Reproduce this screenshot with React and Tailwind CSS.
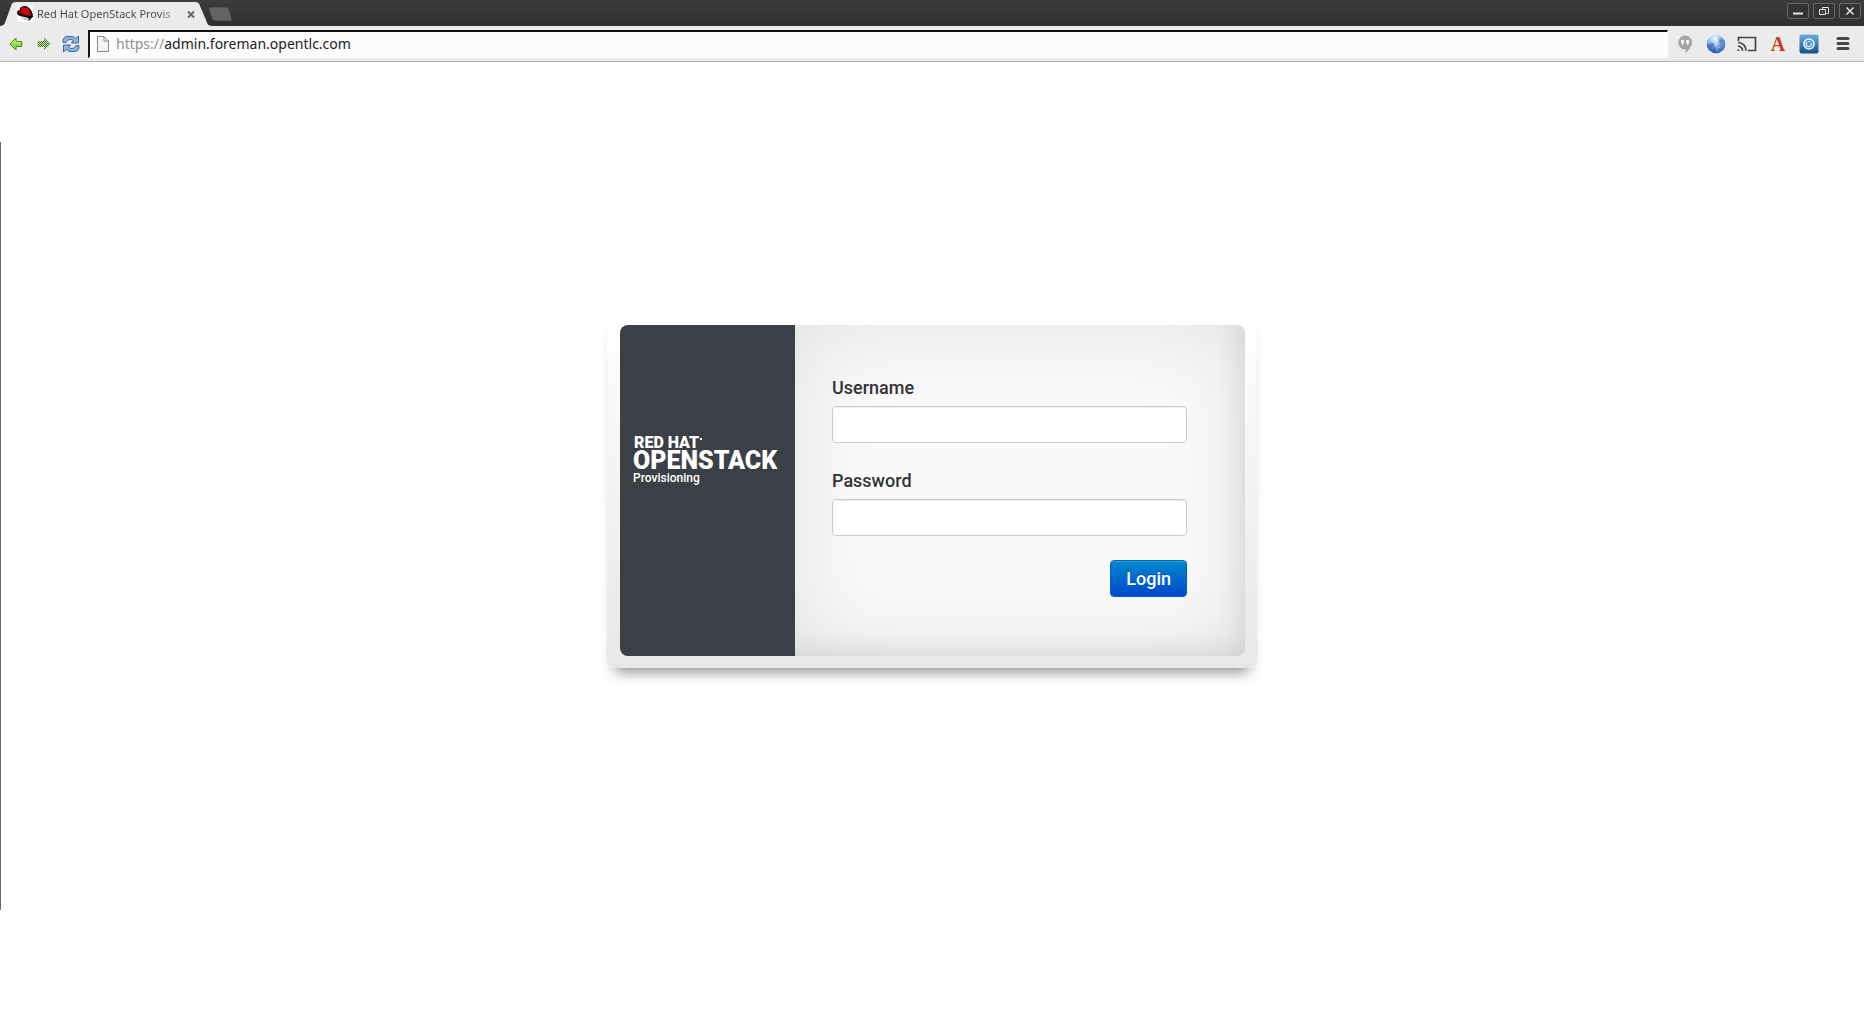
import React from "react";

function RedHatIcon() {
  return (
    <svg viewBox="0 0 16 16" className="h-4 w-4 shrink-0 bg-white" aria-hidden="true">
      <path d="M0 7Q0 4 3 4Q2 2 4 1Q8-1 11 1Q14 3 15 6Q16 8 16 11Q14 13 11 12L3 10Q0 9 0 7Z" fill="#0a0a0a" />
      <path d="M4 2Q6 0 8 2Q11 1 12 4L14 8Q14 11 9 10Q5 9 2 7Q2 5 4 5Z" fill="#d40000" />
      <path d="M3 6Q7 10 13 9.500Q11 11 8 10Q4 9 3 6Z" fill="#111" />
      <path d="M3 10.500Q7 13 12 12.500L11 14Q6 14 3 10.500Z" fill="#b9b9b9" />
      <path d="M12 12L15 11L13.500 13.500L11 15Z" fill="#111" />
    </svg>
  );
}

function TabBackground() {
  return (
    <svg viewBox="0 0 212 24" className="absolute inset-0 h-6 w-full" preserveAspectRatio="none" aria-hidden="true">
      <path d="M0 24C4 24 5 21 6 18L11 4Q12 0 16 0H195Q199 0 200 4L206 18C207 21 208 24 212 24Z" fill="#ebebeb" />
    </svg>
  );
}

function WindowControls() {
  const box = "grid h-4 w-[22px] place-items-center rounded-[2px] border border-[#676767] bg-[#333] text-[#e4e4e4]";
  return (
    <div className="flex gap-1 pt-[3px] pr-[3px]">
      <button className={box} aria-label="Minimize">
        <svg viewBox="0 0 20 14" className="h-3.5 w-5"><path d="M5 8.500H15V10.500H5Z" fill="currentColor" /></svg>
      </button>
      <button className={box} aria-label="Restore">
        <svg viewBox="0 0 20 14" className="h-3.5 w-5" fill="none" stroke="currentColor">
          <path d="M8.500 5.500V3.500H14.500V9.500H12.500M5.500 5.500H11.500V10.500H5.500Z" /><path d="M8 8H9" />
        </svg>
      </button>
      <button className={box} aria-label="Close">
        <svg viewBox="0 0 20 14" className="h-3.5 w-5" stroke="currentColor" strokeWidth="1.500"><path d="M6.500 3.500L13.500 10.500M13.500 3.500L6.500 10.500" /></svg>
      </button>
    </div>
  );
}

function TitleBar() {
  return (
    <header className="flex h-[26px] items-start justify-between bg-linear-to-b from-[#3c3c3c] to-[#2f2f2f]">
      <div className="flex">
        <div className="relative mt-[2px] flex h-6 w-[212px] items-center">
          <TabBackground />
          <div className="relative flex w-full items-center pl-[17px]">
            <RedHatIcon />
            <span className="ml-1 w-[142px] whitespace-nowrap bg-linear-to-r from-[#444] from-85% to-[#44444440] bg-clip-text font-['Noto_Sans',sans-serif] text-[11px] leading-4 text-transparent">
              Red Hat OpenStack Provis
            </span>
            <button className="ml-1 grid h-4 w-4 place-items-center" aria-label="Close tab">
              <svg viewBox="0 0 16 16" className="h-4 w-4" stroke="#666" strokeWidth="1.800"><path d="M5 5.500L11 11.500M11 5.500L5 11.500" /></svg>
            </button>
          </div>
        </div>
        <button aria-label="New tab" className="mt-[7px] -ml-1 h-[14px]">
          <svg viewBox="0 0 25 14" className="h-[14px] w-[25px]"><path d="M2 0H18Q20 0 21 2L24 12Q24.500 14 22 14H7Q5 14 4 12L.5 2Q0 0 2 0Z" fill="#636363" stroke="#292929" strokeWidth=".6" /></svg>
        </button>
      </div>
      <WindowControls />
    </header>
  );
}

function BackIcon() {
  return (
    <svg viewBox="0 0 14 14" className="h-3.5 w-3.5"><path d="M.8 7L7 1V4.500H12.800V9.500H7V13Z" fill="#8fdc45" stroke="#438c14" strokeLinejoin="round" /><path d="M2.500 7L6 3.500V5.500H12" fill="none" stroke="#c5f299" /></svg>
  );
}

function ForwardIcon() {
  return (
    <svg viewBox="0 0 14 14" className="h-3.5 w-3.5">
      <defs><pattern id="stipple" width="2" height="2" patternUnits="userSpaceOnUse"><rect width="2" height="2" fill="#c5dab8" /><rect width="1" height="1" fill="#477528" /><rect x="1" y="1" width="1" height="1" fill="#477528" /></pattern></defs>
      <path d="M13.500 7L7 .5V4H.5V10H7V13.500Z" fill="url(#stipple)" />
    </svg>
  );
}

function ReloadIcon() {
  return (
    <svg viewBox="0 0 18 18" className="h-[18px] w-[18px]" fill="#8db3df" stroke="#345d98" strokeWidth=".9" strokeLinejoin="round">
      <path d="M1 7.500V5Q2 1.500 5 1.500H10Q12 1.500 13.500 3.500L16.500 1V8H9.500L11.500 5.500Q10 4.500 8 4.500Q5 4.500 4 7.500Z" />
      <path d="M17 10.500V13Q16 16.500 13 16.500H8Q6 16.500 4.500 14.500L1.500 17V10H8.500L6.500 12.500Q8 13.500 10 13.500Q13 13.500 14 10.500Z" />
    </svg>
  );
}

function Extensions() {
  return (
    <div className="flex items-center gap-[11px]">
      <button aria-label="Hangouts">
        <svg viewBox="0 0 20 20" className="h-5 w-5"><path d="M10 1.500A7 7 0 0 1 17 8.500C17 13 13 17 10.500 19V15.500A7 7 0 0 1 10 1.500Z" fill="#a5a5a5" /><path d="M6 6H9V9L8 11H7V9H6ZM11 6H14V9L13 11H12V9H11Z" fill="#f4f4f4" /></svg>
      </button>
      <button aria-label="Globe">
        <svg viewBox="0 0 20 20" className="h-5 w-5">
          <defs><radialGradient id="globe" cx=".45" cy=".2" r=".85"><stop offset="0" stopColor="#f2f8ff" /><stop offset=".45" stopColor="#8db6e8" /><stop offset="1" stopColor="#1a4ba0" /></radialGradient></defs>
          <circle cx="10" cy="10" r="9.300" fill="url(#globe)" />
          <path d="M1 11Q4 7 8 9Q8 13 12 18Q5 19 2 14ZM13 4Q17 4 18.500 9L14 11Q12 8 13 4Z" fill="#2456a8" opacity=".5" />
          <path d="M4 5L14 14M15 4L6 15M9 2L11 18M2 9H18" stroke="#fff" strokeWidth=".5" opacity=".6" />
        </svg>
      </button>
      <button aria-label="Cast">
        <svg viewBox="0 0 20 20" className="h-5 w-5" fill="none" stroke="#444" strokeWidth="1.700"><path d="M1.500 7V3.500H18.500V16.500H11M1 8.500A8 8 0 0 1 9 16.800M1 12A5 5 0 0 1 5.500 16.800" /><path d="M.5 14.500L3 17H.5Z" fill="#444" stroke="none" /></svg>
      </button>
      <button aria-label="Dictionary" className="h-5 w-5 font-['Liberation_Serif',serif] text-[20px] leading-5 font-bold text-[#c23c26]">A</button>
      <button aria-label="Screen capture">
        <svg viewBox="0 0 20 20" className="h-5 w-5"><defs><linearGradient id="capture" x2="0" y2="1"><stop stopColor="#68aedb" /><stop offset="1" stopColor="#14508a" /></linearGradient></defs><rect x=".5" y=".5" width="19" height="19" rx="2" fill="url(#capture)" /><circle cx="10" cy="10" r="5" fill="#4a8fc4" stroke="#f5faff" strokeWidth="1.600" /><path d="M8.500 8A2.500 2.500 0 1 0 12 9M9 7.500H11.500" fill="none" stroke="#d9eaff" strokeWidth="1.200" /></svg>
      </button>
      <button aria-label="Menu" className="ml-[3px]">
        <svg viewBox="0 0 20 20" className="h-5 w-5" stroke="#484848" strokeWidth="3" strokeLinecap="round"><path d="M5 4.500H15M5 9.500H15M5 14.500H15" /></svg>
      </button>
    </div>
  );
}

function Toolbar() {
  return (
    <nav className="flex h-9 items-center border-b border-[#b5b5b5] bg-[#ebebeb] pr-[11px] pl-[9px]">
      <button aria-label="Back"><BackIcon /></button>
      <button aria-label="Forward" className="ml-[14px]"><ForwardIcon /></button>
      <button aria-label="Reload" className="ml-[11px]"><ReloadIcon /></button>
      <div className="mr-[7px] ml-2 flex h-7 flex-1 items-center border-t-2 border-r border-b border-l-2 border-[#111] border-r-white border-b-white bg-[#fcfcfc] pl-[7px]">
        <svg viewBox="0 0 12 16" className="h-4 w-3 shrink-0" fill="#f4f4f4" stroke="#888"><path d="M.5.5H7L11.500 5V15.500H.5ZM7 .5V5H11.500" /></svg>
        <div className="relative ml-[7px] flex-1 font-['Noto_Sans',sans-serif] text-[14px] leading-5">
          <input aria-label="Address" type="url" className="absolute inset-0 w-full bg-transparent outline-none" />
          <span className="pointer-events-none text-[#222]"><span className="text-[#929292]">https://</span>admin.foreman.opentlc.com</span>
        </div>
      </div>
      <Extensions />
    </nav>
  );
}

function Brand() {
  return (
    <aside className="w-[175px] shrink-0 bg-[#3b3f46] pt-[110px] pl-[13px] font-['Roboto',sans-serif] text-white">
      <div className="flex gap-px pl-px text-[16px] leading-4 font-black">RED HAT<span className="mt-[3px] h-0.5 w-0.5 bg-white" /></div>
      <div className="text-[25px] leading-5 font-black">OPENSTACK</div>
      <div className="text-[12px] leading-[14px] font-medium">Provisioning</div>
    </aside>
  );
}

function Field({ id, label, type }) {
  return (
    <div className="flex flex-col">
      <label htmlFor={id} className="mb-2 font-['Roboto',sans-serif] text-[18px] leading-5 font-medium text-[#333]">{label}</label>
      <input id={id} type={type} className="h-[37px] w-full rounded-[4px] border border-[#ccc] bg-white px-2 text-lg shadow-[inset_0_1px_1px_rgba(0,0,0,0.075)] outline-none" />
    </div>
  );
}

function LoginCard() {
  return (
    <div className="mx-auto w-full max-w-[650px] rounded-[9px] bg-linear-to-b from-white to-[#e7e7e7] p-3 pt-[13px] pl-[13px] shadow-[0_12px_14px_-8px_rgba(0,0,0,0.45)]">
      <div className="flex overflow-hidden rounded-lg">
        <Brand />
        <form onSubmit={(e) => e.preventDefault()} className="flex flex-1 flex-col bg-[#fafafa] pt-[53px] pr-[58px] pb-[59px] pl-[37px] shadow-[inset_0_0_90px_rgba(0,0,0,0.1),inset_-16px_-16px_32px_-16px_rgba(0,0,0,0.12)]">
          <div className="flex flex-col gap-7">
            <Field id="username" label="Username" type="text" />
            <Field id="password" label="Password" type="password" />
          </div>
          <button type="submit" className="mt-6 h-[37px] self-end rounded-[4px] border border-[#0064bd] bg-linear-to-b from-[#0088cc] to-[#0044cc] px-[15px] font-['Roboto',sans-serif] text-[18px] leading-6 font-medium text-white shadow-[inset_0_1px_0_rgba(255,255,255,0.2),0_1px_2px_rgba(0,0,0,0.05)] [text-shadow:0_-1px_0_rgba(0,0,0,0.25)]">Login</button>
        </form>
      </div>
    </div>
  );
}

export default function App() {
  return (
    <div className="flex min-h-screen flex-col bg-white">
      <TitleBar />
      <Toolbar />
      <main className="relative flex-1 pt-[250px]">
        <div className="absolute top-20 bottom-[113px] left-0 w-px bg-[#666]" />
        <LoginCard />
      </main>
    </div>
  );
}
